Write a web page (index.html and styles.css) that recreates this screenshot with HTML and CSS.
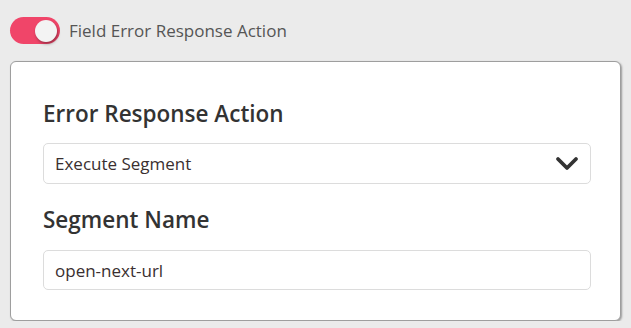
FILE: index.html
```html
<!DOCTYPE html>
<html>
<head>
<meta charset="utf-8">
<link rel="stylesheet" href="styles.css">
</head>
<body>
<div class="page">
  <div class="toggle-row">
    <span class="toggle"><span class="knob"></span></span>
    <span class="toggle-label">Field Error Response Action</span>
  </div>
  <div class="card">
    <h2 class="field-title">Error Response Action</h2>
    <div class="select">
      <span class="select-value">Execute Segment</span>
      <svg class="chevron" width="24" height="16" viewBox="0 0 24 16"><path d="M3 3 L12 12 L21 3" fill="none" stroke="#333" stroke-width="3.8" stroke-linecap="round" stroke-linejoin="round"/></svg>
    </div>
    <h2 class="field-title second">Segment Name</h2>
    <div class="input">open-next-url</div>
  </div>
</div>
</body>
</html>
```

FILE: styles.css
```css
html, body {
  margin: 0;
  padding: 0;
  background: #ebebeb;
}
body {
  font-family: "Open Sans", "Noto Sans", sans-serif;
  color: #333;
}
.page {
  padding: 17px 10px 0 10px;
}
.toggle-row {
  display: flex;
  align-items: center;
  gap: 9px;
  height: 27px;
}
.toggle {
  position: relative;
  width: 50px;
  height: 27px;
  border-radius: 14px;
  background: #f04569;
  flex: none;
}
.knob {
  position: absolute;
  right: 3px;
  top: 3px;
  width: 22px;
  height: 22px;
  border-radius: 50%;
  background: #f3f3f3;
  box-shadow: 1px 2px 3px rgba(0,0,0,0.35);
}
.toggle-label {
  font-size: 17px;
  color: #555;
}
.card {
  margin-top: 17px;
  background: #fff;
  border: 1px solid #9e9e9e;
  border-radius: 6px;
  box-shadow: 1px 1px 2px rgba(0,0,0,0.35);
  height: 258px;
  padding: 0 29px 0 32px;
}
.field-title {
  margin: 0;
  font-size: 22.5px;
  font-weight: 600;
  color: #333;
  padding-top: 37px;
  line-height: 30px;
  height: 44px;
}
.field-title.second {
  padding-top: 21px;
  height: 45px;
}
.select, .input {
  box-sizing: border-box;
  border: 1px solid #dcdcdc;
  border-radius: 5px;
  height: 41px;
  display: flex;
  align-items: center;
  padding: 0 11px;
  font-size: 17px;
  color: #3a2f30;
}
.input {
  height: 40px;
}
.select {
  justify-content: space-between;
}
```
